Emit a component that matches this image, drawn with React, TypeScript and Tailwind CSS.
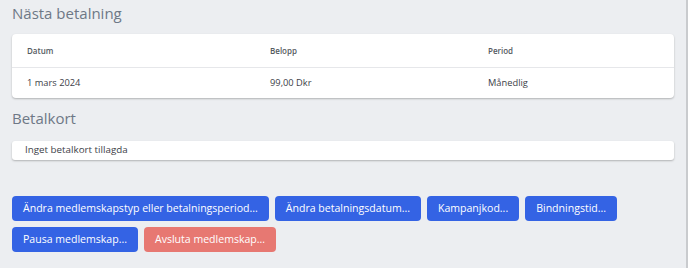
import { ReactNode } from 'react';

const font = { fontFamily: '"Open Sans", "Liberation Sans", sans-serif' };

function Btn({ children, danger }: { children: ReactNode; danger?: boolean }) {
  return (
    <button
      className={`h-[25px] px-[11px] rounded-[4px] text-[10.55px] text-white ${danger ? 'bg-[#e77872]' : 'bg-[#3463e4]'}`}
    >
      {children}
    </button>
  );
}

export default function App() {
  return (
    <div style={font} className="w-[688px] h-[268px] bg-[#eceef1] border-r-2 border-[#c9cbce] overflow-hidden">
      <div className="pl-[12px] pr-[12px] pt-[3px]">
        <h2 className="text-[15px] text-[#6e7886] leading-[20px] h-[31px]">Nästa betalning</h2>

        <div className="bg-white rounded-[4px] shadow-[0_1px_2px_rgba(0,0,0,0.25)] text-[#3d4148]">
          <div className="grid grid-cols-[243px_218px_1fr] h-[34px] items-center pl-[15px] border-b border-[#e6e7ea] text-[8px] font-semibold text-[#555a61]">
            <div>Datum</div>
            <div>Belopp</div>
            <div>Period</div>
          </div>
          <div className="grid grid-cols-[243px_218px_1fr] h-[30px] items-center pl-[15px] text-[9.3px]">
            <div>1 mars 2024</div>
            <div>99,00 Dkr</div>
            <div>Månedlig</div>
          </div>
        </div>

        <h2 className="text-[15px] text-[#6e7886] leading-[20px] mt-[10px] h-[33px]">Betalkort</h2>

        <div className="bg-white rounded-[3px] shadow-[0_1px_2px_rgba(0,0,0,0.25)] h-[19px] flex items-center pl-[13px] text-[9.8px] text-[#3d4148]">
          Inget betalkort tillagda
        </div>

        <div className="mt-[36px] flex flex-col gap-[6px]">
          <div className="flex gap-[6px]">
            <Btn>Ändra medlemskapstyp eller betalningsperiod...</Btn>
            <Btn>Ändra betalningsdatum...</Btn>
            <Btn>Kampanjkod...</Btn>
            <Btn>Bindningstid...</Btn>
          </div>
          <div className="flex gap-[6px]">
            <Btn>Pausa medlemskap...</Btn>
            <Btn danger>Avsluta medlemskap...</Btn>
          </div>
        </div>
      </div>
    </div>
  );
}
